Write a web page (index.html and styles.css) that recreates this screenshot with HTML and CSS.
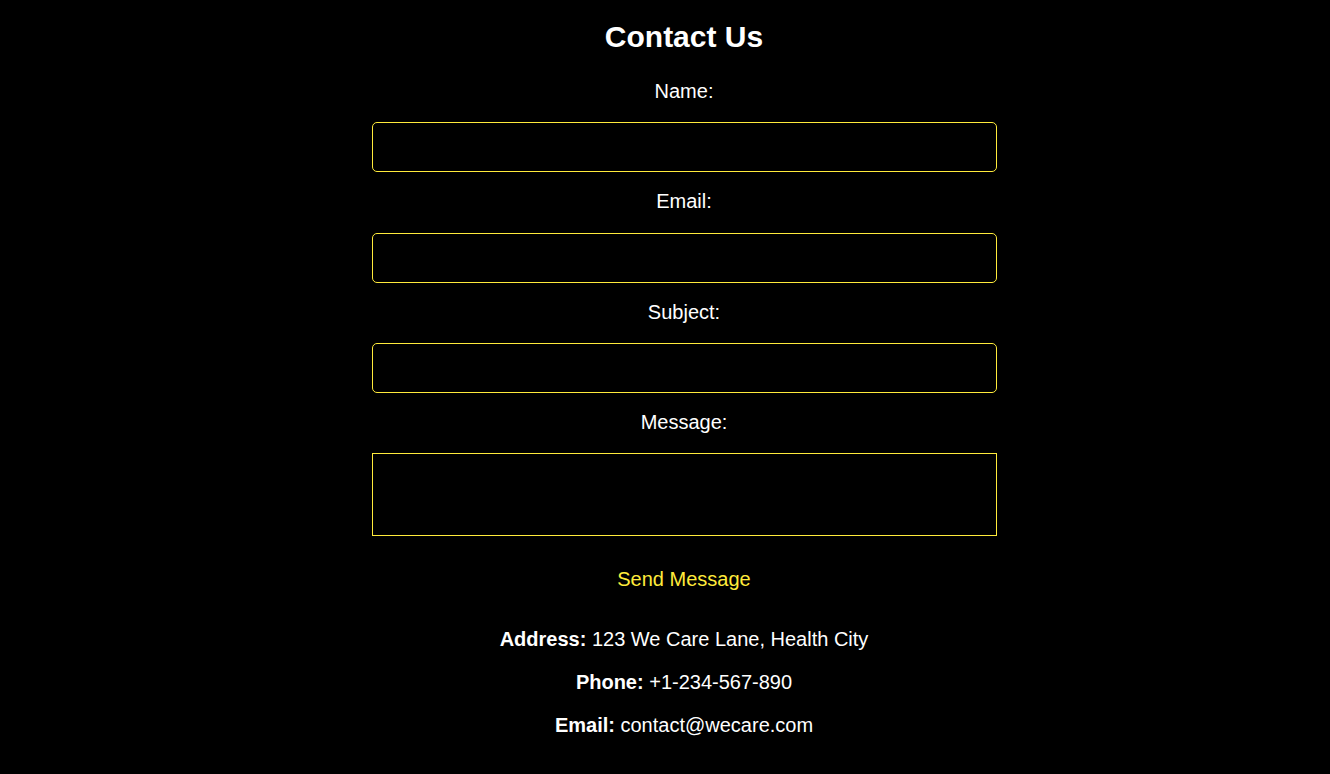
FILE: index.html
```html
<!DOCTYPE html>
<html lang="en">
<head>
<meta charset="utf-8">
<title>Contact Us</title>
<link rel="stylesheet" href="styles.css">
</head>
<body>
<main class="page">
  <h1 class="title">Contact Us</h1>
  <form class="form">
    <label class="label" for="name">Name:</label>
    <input class="field" id="name" type="text">
    <label class="label" for="email">Email:</label>
    <input class="field" id="email" type="email">
    <label class="label" for="subject">Subject:</label>
    <input class="field" id="subject" type="text">
    <label class="label" for="message">Message:</label>
    <textarea class="area" id="message"></textarea>
    <button class="send" type="button">Send Message</button>
  </form>
  <div class="info">
    <p class="line"><strong>Address:</strong> 123 We Care Lane, Health City</p>
    <p class="line"><strong>Phone:</strong> +1-234-567-890</p>
    <p class="line"><strong>Email:</strong> contact@wecare.com</p>
  </div>
</main>
</body>
</html>
```
FILE: styles.css
```css
html, body {
  margin: 0;
  background: #000;
  color: #fff;
  font-family: "Liberation Sans", Arial, sans-serif;
}

.page {
  padding: 20px 0 20px 38px;
  text-align: center;
}

.title {
  margin: 0 0 25.5px;
  font-size: 30px;
  line-height: 34px;
  font-weight: bold;
}

.form {
  width: 625px;
  margin: 0 auto;
  display: flex;
  flex-direction: column;
}

.label {
  font-size: 20px;
  line-height: 23px;
}

.field {
  box-sizing: border-box;
  height: 50px;
  margin: 19.5px 0 18px;
  background: #000;
  color: #fff;
  border: 1px solid #ffeb3b;
  border-radius: 5px;
  outline: none;
  font: 20px "Liberation Sans", Arial, sans-serif;
  padding: 0 10px;
}

.area {
  box-sizing: border-box;
  height: 83px;
  margin: 19px 0 0;
  background: #000;
  color: #fff;
  border: 1px solid #ffeb3b;
  border-radius: 0;
  outline: none;
  resize: none;
  font: 20px "Liberation Sans", Arial, sans-serif;
}

.send {
  align-self: center;
  margin-top: 21.5px;
  padding: 10px 20px;
  background: transparent;
  border: none;
  color: #ffeb3b;
  font: 20px "Liberation Sans", Arial, sans-serif;
  line-height: 23px;
  cursor: pointer;
}

.info {
  margin-top: 27px;
}

.line {
  margin: 0 0 20px;
  font-size: 20px;
  line-height: 23px;
}
```
